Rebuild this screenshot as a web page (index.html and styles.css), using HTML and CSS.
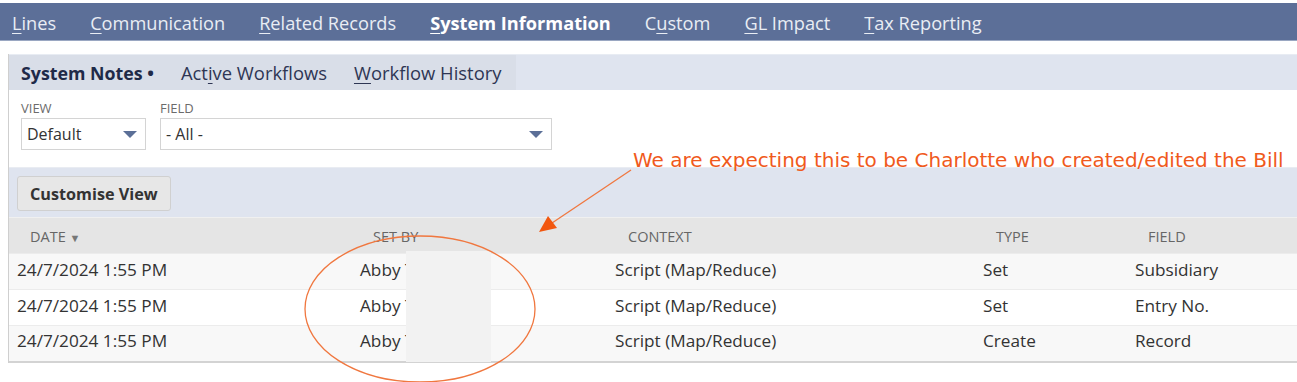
FILE: index.html
```html
<!DOCTYPE html>
<html>

<head>
    <meta name="viewport" content="width=device-width, initial-scale=1">
    <link rel="stylesheet" href="styles.css">
</head>

<body>

    <div class="maintabs">
        <span class="tab"><u>L</u>ines</span>
        <span class="tab"><u>C</u>ommunication</span>
        <span class="tab"><u>R</u>elated Records</span>
        <span class="tab active"><u>S</u>ystem Information</span>
        <span class="tab">C<u>u</u>stom</span>
        <span class="tab"><u>G</u>L Impact</span>
        <span class="tab"><u>T</u>ax Reporting</span>
    </div>

    <div class="panel">
        <div class="subtabs">
            <div class="subtabs-inner">
                <span class="subtab current">System Notes &bull;</span>
                <span class="subtab">Act<u>i</u>ve Workflows</span>
                <span class="subtab"><u>W</u>orkflow History</span>
            </div>
        </div>

        <div class="filters">
            <div class="filter">
                <label>VIEW</label>
                <div class="select small">Default<span class="arrow"></span></div>
            </div>
            <div class="filter">
                <label>FIELD</label>
                <div class="select wide">- All -<span class="arrow"></span></div>
            </div>
        </div>

        <div class="toolbar">
            <button class="btn">Customise View</button>
        </div>

        <table class="notes">
            <thead>
                <tr>
                    <th class="c-date">DATE <span class="sort">&#9660;</span></th>
                    <th class="c-by">SET BY</th>
                    <th class="c-ctx">CONTEXT</th>
                    <th class="c-type">TYPE</th>
                    <th class="c-field">FIELD</th>
                </tr>
            </thead>
            <tbody>
                <tr>
                    <td>24/7/2024 1:55 PM</td>
                    <td>Abby T</td>
                    <td>Script (Map/Reduce)</td>
                    <td>Set</td>
                    <td>Subsidiary</td>
                </tr>
                <tr>
                    <td>24/7/2024 1:55 PM</td>
                    <td>Abby T</td>
                    <td>Script (Map/Reduce)</td>
                    <td>Set</td>
                    <td>Entry No.</td>
                </tr>
                <tr>
                    <td>24/7/2024 1:55 PM</td>
                    <td>Abby T</td>
                    <td>Script (Map/Reduce)</td>
                    <td>Create</td>
                    <td>Record</td>
                </tr>
            </tbody>
        </table>
    </div>

    <!-- redacted surname -->
    <div class="redact"></div>

    <!-- annotation drawn over the screenshot -->
    <svg class="markup" width="1297" height="382" viewBox="0 0 1297 382">
        <ellipse cx="420" cy="309" rx="115" ry="73" fill="none" stroke="#f0773f" stroke-width="1.3"/>
        <line x1="631" y1="170" x2="552" y2="223" stroke="#f0773f" stroke-width="1.3"/>
        <polygon points="539,232 548,216 557,228" fill="#f2570f"/>
    </svg>
    <div class="note">We are expecting this to be Charlotte who created/edited the Bill</div>

</body>

</html>
```

FILE: styles.css
```css
html, body {
    height: 382px;
}

body {
    margin: 0;
    padding-top: 3px;
    box-sizing: border-box;
    font-family: "Open Sans", "Liberation Sans", sans-serif;
    color: #333;
    background: #fff;
    position: relative;
    overflow: hidden;
}

/* top tab strip */
.maintabs {
    height: 37px;
    background: #5c6f98;
    border-bottom: 1px solid #9aa7c2;
    display: flex;
    align-items: center;
    gap: 34px;
    padding-left: 12px;
}

.tab {
    font-size: 18.2px;
    color: #e9edf4;
    position: relative;
    margin-top: 2px;
}

.tab u {
    text-underline-offset: 3px;
    text-decoration-thickness: 1px;
}

.tab.active {
    font-weight: 700;
    color: #fff;
}

/* small pointer under the active tab */
.tab.active::after {
    content: "";
    position: absolute;
    left: 50%;
    bottom: -12px;
    margin-left: -6px;
    border-left: 6px solid transparent;
    border-right: 6px solid transparent;
    border-bottom: 5px solid #fff;
}

.panel {
    margin: 13px 0 0 8px;
    border-left: 1px solid #cfcfcf;
}

/* sub tabs */
.subtabs {
    height: 35px;
    background: #dfe4ef;
    border-top: 1px solid #e8ecf3;
}

.subtabs-inner {
    width: 495px;
    height: 35px;
    padding-left: 12px;
    background: #d9dee8;
    display: flex;
    align-items: center;
    gap: 27px;
}

.subtab {
    font-size: 18.4px;
    color: #2e3654;
    position: relative;
}

.subtab u {
    text-underline-offset: 3px;
    text-decoration-thickness: 1px;
}

.subtab.current {
    font-weight: 700;
    color: #1f2a48;
    font-size: 17.8px;
}

.subtab.current::after {
    content: "";
    position: absolute;
    left: 50%;
    bottom: -10px;
    margin-left: -9px;
    border-left: 9px solid transparent;
    border-right: 9px solid transparent;
    border-bottom: 5px solid #fff;
}

/* filter row */
.filters {
    height: 77px;
    display: flex;
    gap: 14px;
    padding: 0 0 0 12px;
}

.filter label {
    display: block;
    margin-top: 10px;
    font-size: 13px;
    color: #6b6b6b;
    line-height: 17px;
}

.select {
    position: relative;
    box-sizing: border-box;
    height: 32px;
    margin-top: 1px;
    border: 1px solid #d4d4d4;
    font-size: 16px;
    color: #333;
    line-height: 30px;
    padding-left: 5px;
}

.select.small {
    width: 125px;
}

.select.wide {
    width: 392px;
}

.arrow {
    position: absolute;
    right: 8px;
    top: 12px;
    border-left: 7px solid transparent;
    border-right: 7px solid transparent;
    border-top: 7px solid #5b6f97;
}

/* toolbar band */
.toolbar {
    height: 50px;
    background: #dfe4ef;
    border-top: 1px solid #e9ecf2;
    box-sizing: border-box;
    padding: 8px 0 0 8px;
}

.btn {
    height: 35px;
    padding: 0 12px;
    background: #e7e7e7;
    border: 1px solid #d0d0d0;
    border-radius: 3px;
    font-family: "Open Sans", "Liberation Sans", sans-serif;
    font-size: 16.2px;
    font-weight: 700;
    color: #333;
}

/* system notes list */
.notes {
    width: 1300px;
    border-collapse: collapse;
    border-bottom: 2px solid #d3d3d3;
}

.notes th {
    height: 36px;
    box-sizing: border-box;
    background: #e5e5e5;
    font-size: 14.5px;
    font-weight: 400;
    color: #666;
    text-align: left;
    padding: 1px 0 0 21px;
    border-top: 1px solid #f0f0f0;
}

.notes .sort {
    font-size: 11px;
    color: #777;
}

.notes td {
    height: 36px;
    font-size: 17.2px;
    color: #333;
    padding: 0 0 5px 8px;
    border-top: 1px solid #ececec;
    box-sizing: border-box;
}

.notes tbody tr:nth-child(odd) td {
    background: #f8f8f8;
}

.c-date { width: 343px; }
.c-by { width: 255px; }
.c-ctx { width: 368px; }
.c-type { width: 152px; }

/* grey box covering surname */
.redact {
    position: absolute;
    left: 406px;
    top: 251px;
    width: 85px;
    height: 111px;
    background: #f2f2f2;
}

.markup {
    position: absolute;
    left: 0;
    top: 0;
}

.note {
    position: absolute;
    left: 633px;
    top: 150px;
    font-family: "DejaVu Sans", sans-serif;
    font-size: 20px;
    line-height: 20px;
    color: #f05a1c;
    white-space: nowrap;
}
```
